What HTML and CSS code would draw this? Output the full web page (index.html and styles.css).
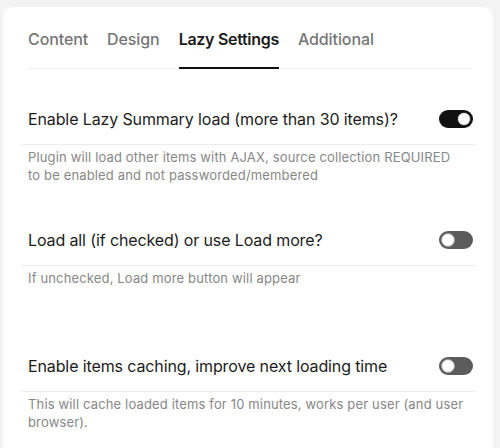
FILE: index.html
```html
<!DOCTYPE html>
<html>
<head>
<meta charset="utf-8">
<link rel="stylesheet" href="styles.css">
</head>
<body>
<div class="card">
  <nav class="tabs">
    <span class="tab">Content</span>
    <span class="tab">Design</span>
    <span class="tab active">Lazy Settings</span>
    <span class="tab">Additional</span>
  </nav>
  <div class="setting first">
    <div class="head">
      <span class="title">Enable Lazy Summary load (more than 30 items)?</span>
      <span class="toggle on"><span class="knob"></span></span>
    </div>
    <p class="desc">Plugin will load other items with AJAX, source collection REQUIRED<br>to be enabled and not passworded/membered</p>
  </div>
  <div class="setting">
    <div class="head">
      <span class="title">Load all (if checked) or use Load more?</span>
      <span class="toggle"><span class="knob"></span></span>
    </div>
    <p class="desc">If unchecked, Load more button will appear</p>
  </div>
  <div class="setting spaced">
    <div class="head">
      <span class="title">Enable items caching, improve next loading time</span>
      <span class="toggle"><span class="knob"></span></span>
    </div>
    <p class="desc">This will cache loaded items for 10 minutes, works per user (and user browser).</p>
  </div>
</div>
</body>
</html>
```
FILE: styles.css
```css
html, body {
  margin: 0;
  padding: 0;
  background: #f3f3f3;
  font-family: Inter, "Noto Sans", sans-serif;
}
.card {
  margin: 7px 7px 0 3px;
  background: #fff;
  border-radius: 10px 10px 0 0;
  height: 441px;
  padding-top: 22px;
  box-sizing: border-box;
}
.tabs {
  display: flex;
  gap: 19px;
  margin: 0 21px 0 25px;
  border-bottom: 1px solid #efefef;
}
.tab {
  font-size: 16px;
  line-height: 20px;
  font-weight: 500;
  color: #767676;
  padding-bottom: 18px;
  border-bottom: 2px solid transparent;
  margin-bottom: -1px;
  letter-spacing: -0.1px;
}
.tab.active {
  color: #1b1b1b;
  font-weight: 600;
  letter-spacing: -0.3px;
  border-bottom-color: #111;
}
.setting {
  margin: 0 17px 0 19px;
}
.setting.first { padding-top: 40px; }
.setting + .setting { padding-top: 46px; }
.setting.spaced { padding-top: 69px; }
.head {
  display: flex;
  align-items: center;
  justify-content: space-between;
  padding: 0 3px 15px 6px;
  border-bottom: 1px solid #ececec;
}
.title {
  font-size: 16px;
  line-height: 20px;
  color: #1c1c1c;
  letter-spacing: -0.12px;
}
.toggle {
  position: relative;
  width: 34px;
  height: 18px;
  border-radius: 9px;
  background: #5c5c5c;
  flex: none;
}
.toggle.on { background: #111; }
.knob {
  position: absolute;
  top: 2px;
  left: 2px;
  width: 12px;
  height: 12px;
  border-radius: 50%;
  background: #fff;
  border: 1px solid #9a9a9a;
}
.toggle.on .knob {
  left: auto;
  right: 2px;
  border-color: #222;
}
.desc {
  margin: 3px 0 0;
  padding: 0 4px 0 6px;
  font-size: 13px;
  line-height: 18px;
  color: #878787;
  letter-spacing: 0.15px;
}
```
